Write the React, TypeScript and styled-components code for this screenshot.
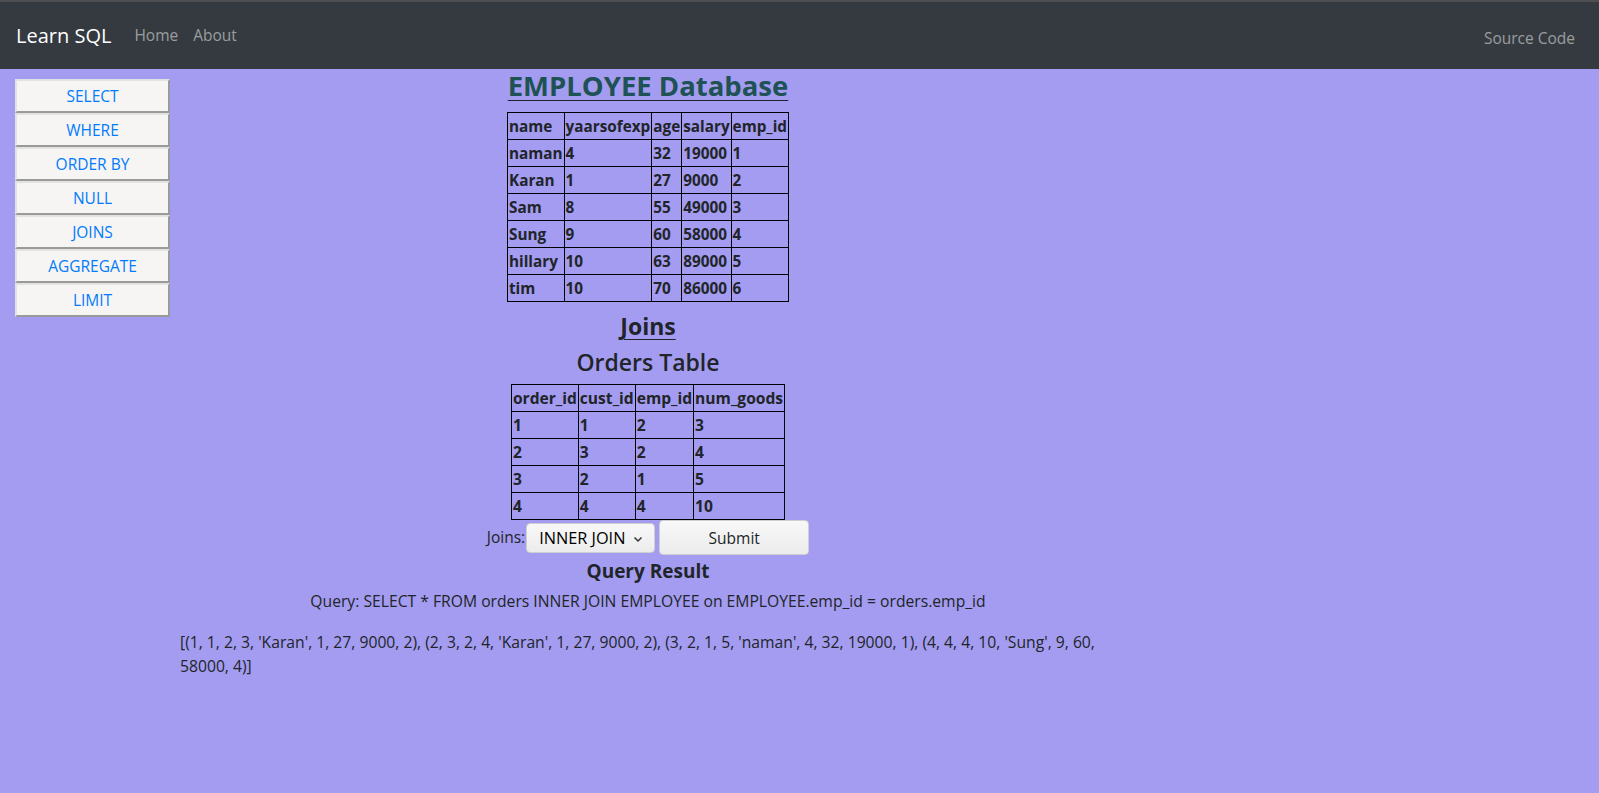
import React from "react";
import styled, { createGlobalStyle } from "styled-components";

const GlobalStyle = createGlobalStyle`
  * { box-sizing: border-box; }
  html, body { margin: 0; padding: 0; }
  body {
    background: #a39cf0;
    color: #212529;
    font-family: "Open Sans", "Noto Sans", "DejaVu Sans", sans-serif;
    font-size: 16px;
    line-height: 1.5;
    min-height: 793px;
  }
`;

const Navbar = styled.nav`
  height: 69px;
  background: #343a40;
  border-top: 2px solid #4d4f52;
  display: flex;
  align-items: center;
  padding: 0 16px;
`;

const Brand = styled.span`
  color: #fff;
  font-size: 20px;
  font-weight: 500;
  margin-right: 23px;
  margin-top: 0;
`;

const NavLink = styled.span<{ $right?: boolean }>`
  color: rgba(255, 255, 255, 0.5);
  font-size: 15.5px;
  margin-right: 15px;
  margin-top: ${(p) => (p.$right ? "6px" : "0")};
  margin-left: ${(p) => (p.$right ? "auto" : "0")};
  ${(p) => (p.$right ? "margin-right: 8px;" : "")}
`;

const Body = styled.div`
  display: flex;
  align-items: flex-start;
`;

const Sidebar = styled.div`
  width: 155px;
  margin-left: 15px;
  margin-top: 10px;
  display: flex;
  flex-direction: column;
`;

const SideButton = styled.button`
  height: 34px;
  width: 155px;
  background: #f6f5f3;
  border-style: solid;
  border-width: 2px;
  border-color: #e2e2e2 #9a9a9a #9a9a9a #e2e2e2;
  color: #007bff;
  font-family: inherit;
  font-size: 15.5px;
  padding: 0;
  cursor: pointer;
`;

const Main = styled.main`
  width: 936px;
  margin-left: 10px;
  display: flex;
  flex-direction: column;
  align-items: center;
`;

const Title = styled.h3`
  margin: 0 0 10px;
  font-size: 27.5px;
  font-weight: 700;
  line-height: 1.2;
  color: #1f5254;
  text-decoration: underline;
  text-decoration-color: #212529;
  text-decoration-thickness: 1px;
  text-underline-offset: 4px;
`;

const Table = styled.table<{ $mb: number; $fs: number }>`
  border-collapse: collapse;
  margin-bottom: ${(p) => p.$mb}px;
  font-weight: 700;
  font-size: ${(p) => p.$fs}px;
`;

const Cell = styled.td`
  border: 1px solid #000;
  padding: 1px 1px;
  line-height: 24px;
  text-align: left;
  white-space: nowrap;
`;

const SectionTitle = styled.h4<{ $underline?: boolean }>`
  margin: 0 0 8px;
  font-size: 23px;
  line-height: 1.2;
  font-weight: ${(p) => (p.$underline ? 700 : 600)};
  text-decoration: ${(p) => (p.$underline ? "underline" : "none")};
  text-decoration-thickness: 1px;
  text-underline-offset: 4px;
`;

const FormRow = styled.div`
  display: flex;
  align-items: center;
  margin-top: 0;
  height: 35px;
`;

const Label = styled.label`
  font-size: 15.5px;
  margin-right: 1px;
`;

const SelectBox = styled.div`
  position: relative;
  width: 129px;
  height: 30px;
  border: 1px solid #cfcfcf;
  border-radius: 4px;
  background: linear-gradient(#f8f8f8, #ececec);
  display: flex;
  align-items: center;
  margin-right: 4px;
`;

const Select = styled.select`
  appearance: none;
  border: none;
  background: transparent;
  font-family: inherit;
  font-size: 16.3px;
  color: #000;
  padding: 0 0 0 12px;
  width: 100%;
  height: 100%;
  outline: none;
`;

const Chevron = styled.svg`
  position: absolute;
  right: 11px;
  top: 12px;
  pointer-events: none;
`;

const SubmitButton = styled.button`
  width: 150px;
  height: 35px;
  border: 1px solid #cfcfcf;
  border-radius: 4px;
  background: linear-gradient(#f8f8f8, #ececec);
  font-family: inherit;
  font-size: 15.5px;
  color: #212529;
`;

const ResultTitle = styled.h5`
  margin: 5px 0 7px;
  font-size: 19px;
  font-weight: 700;
  line-height: 1.2;
`;

const QueryText = styled.p`
  margin: 0 0 16px;
  font-size: 15.7px;
`;

const ResultText = styled.p`
  margin: 0;
  align-self: stretch;
  font-size: 15.7px;
  line-height: 24px;
`;

const sideItems = ["SELECT", "WHERE", "ORDER BY", "NULL", "JOINS", "AGGREGATE", "LIMIT"];

const employees = [
  ["name", "yaarsofexp", "age", "salary", "emp_id"],
  ["naman", "4", "32", "19000", "1"],
  ["Karan", "1", "27", "9000", "2"],
  ["Sam", "8", "55", "49000", "3"],
  ["Sung", "9", "60", "58000", "4"],
  ["hillary", "10", "63", "89000", "5"],
  ["tim", "10", "70", "86000", "6"],
];

const orders = [
  ["order_id", "cust_id", "emp_id", "num_goods"],
  ["1", "1", "2", "3"],
  ["2", "3", "2", "4"],
  ["3", "2", "1", "5"],
  ["4", "4", "4", "10"],
];

function DataTable({ rows, mb, fs }: { rows: string[][]; mb: number; fs: number }) {
  return (
    <Table $mb={mb} $fs={fs}>
      <tbody>
        {rows.map((r, i) => (
          <tr key={i}>
            {r.map((c, j) => (
              <Cell key={j}>{c}</Cell>
            ))}
          </tr>
        ))}
      </tbody>
    </Table>
  );
}

export default function App() {
  return (
    <>
      <GlobalStyle />
      <Navbar>
        <Brand>Learn SQL</Brand>
        <NavLink>Home</NavLink>
        <NavLink>About</NavLink>
        <NavLink $right>Source Code</NavLink>
      </Navbar>
      <Body>
        <Sidebar>
          {sideItems.map((s) => (
            <SideButton key={s}>{s}</SideButton>
          ))}
        </Sidebar>
        <Main>
          <Title>EMPLOYEE Database</Title>
          <DataTable rows={employees} mb={11} fs={15.3} />
          <SectionTitle $underline>Joins</SectionTitle>
          <SectionTitle>Orders Table</SectionTitle>
          <DataTable rows={orders} mb={0} fs={15.6} />
          <FormRow>
            <Label>Joins:</Label>
            <SelectBox>
              <Select defaultValue="INNER JOIN">
                <option>INNER JOIN</option>
                <option>LEFT JOIN</option>
                <option>RIGHT JOIN</option>
              </Select>
              <Chevron width="10" height="7" viewBox="0 0 10 7">
                <path d="M1.5 1.5 L5 5 L8.5 1.5" fill="none" stroke="#333" strokeWidth="1.5" />
              </Chevron>
            </SelectBox>
            <SubmitButton>Submit</SubmitButton>
          </FormRow>
          <ResultTitle>Query Result</ResultTitle>
          <QueryText>
            Query: SELECT * FROM orders INNER JOIN EMPLOYEE on EMPLOYEE.emp_id = orders.emp_id
          </QueryText>
          <ResultText>
            [(1, 1, 2, 3, 'Karan', 1, 27, 9000, 2), (2, 3, 2, 4, 'Karan', 1, 27, 9000, 2), (3, 2, 1, 5,
            'naman', 4, 32, 19000, 1), (4, 4, 4, 10, 'Sung', 9, 60, 58000, 4)]
          </ResultText>
        </Main>
      </Body>
    </>
  );
}
